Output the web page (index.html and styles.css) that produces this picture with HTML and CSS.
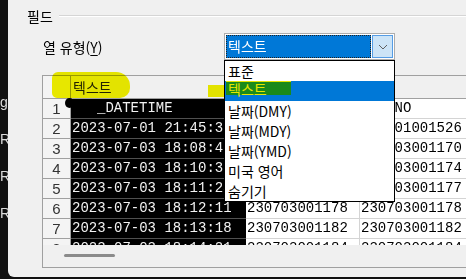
FILE: index.html
```html
<!DOCTYPE html>
<html lang="ko">
<head>
    <meta charset="UTF-8">
    <title>텍스트 마법사</title>
    <link rel="stylesheet" href="styles.css">
</head>
<body>
    <div class="side">
        <div>ge</div>
        <div>R</div>
        <div>Re</div>
        <div>Re</div>
    </div>
    <div class="win">
        <div class="group-head">
            <span class="group-label">필드</span>
            <span class="group-line"></span>
        </div>
        <div class="type-row">
            <label class="type-label">열 유형(<u>Y</u>)</label>
            <div class="combo">
                <div class="combo-val">텍스트</div>
                <div class="combo-btn">
                    <svg width="10" height="6" viewBox="0 0 10 6"><path d="M1 1 L5 5 L9 1" fill="none" stroke="#606060" stroke-width="1"/></svg>
                </div>
            </div>
        </div>

        <div class="grid">
            <div class="row head">
                <div class="rn"></div>
                <div class="c1">텍스트</div>
                <div class="c2">표준</div>
                <div class="c3">표준</div>
            </div>
            <div class="body">
                <div class="row"><div class="rn">1</div><div class="c1 sel first">_DATETIME</div><div class="c2">ITEM_NO</div><div class="c3">LOT_NO</div></div>
                <div class="row"><div class="rn">2</div><div class="c1 sel">2023-07-01 21:45:32</div><div class="c2">230701001526</div><div class="c3">230701001526</div></div>
                <div class="row"><div class="rn">3</div><div class="c1 sel">2023-07-03 18:08:45</div><div class="c2">230703001170</div><div class="c3">230703001170</div></div>
                <div class="row"><div class="rn">4</div><div class="c1 sel">2023-07-03 18:10:36</div><div class="c2">230703001174</div><div class="c3">230703001174</div></div>
                <div class="row"><div class="rn">5</div><div class="c1 sel">2023-07-03 18:11:24</div><div class="c2">230703001177</div><div class="c3">230703001177</div></div>
                <div class="row"><div class="rn">6</div><div class="c1 sel">2023-07-03 18:12:11</div><div class="c2">230703001178</div><div class="c3">230703001178</div></div>
                <div class="row"><div class="rn">7</div><div class="c1 sel">2023-07-03 18:13:18</div><div class="c2">230703001182</div><div class="c3">230703001182</div></div>
                <div class="row"><div class="rn">8</div><div class="c1 sel">2023-07-03 18:14:21</div><div class="c2">230703001184</div><div class="c3">230703001184</div></div>
            </div>
            <div class="hscroll"><div class="thumb"></div></div>
        </div>

        <!-- marker scribbles over the screenshot -->
        <div class="marker blob"></div>
        <div class="marker patch"></div>
        <div class="ink-dot"></div>

        <ul class="droplist">
            <li>표준</li>
            <li class="on"><span class="hl">텍스트</span></li>
            <li>날짜(DMY)</li>
            <li>날짜(MDY)</li>
            <li>날짜(YMD)</li>
            <li>미국 영어</li>
            <li>숨기기</li>
        </ul>
    </div>
</body>
</html>
```

FILE: styles.css
```css
body {
    margin: 0;
    background: #111;
    display: flex;
    height: 279px;
    overflow: hidden;
    font-family: "Noto Sans CJK KR", "Noto Sans", sans-serif;
}
.side {
    width: 8px;
    overflow: hidden;
    color: #ddd;
    font-family: "Liberation Sans", sans-serif;
    font-size: 14px;
    line-height: 37px;
    padding-top: 84px;
    white-space: nowrap;
}
.win {
    flex: 1;
    position: relative;
    height: 277px;
    background: #f0f0f0;
    border-bottom-left-radius: 6px;
    overflow: hidden;
    font-size: 14px;
    color: #000;
}
.group-head {
    display: flex;
    align-items: center;
    height: 20px;
    margin-top: 6px;
    padding-left: 19px;
}
.group-label {
    line-height: 20px;
}
.group-line {
    flex: 1;
    margin-left: 6px;
    border-top: 1px solid #d5d5d5;
    border-bottom: 1px solid #fff;
}
.type-row {
    display: flex;
    align-items: center;
    margin-top: 7px;
    padding-left: 35px;
}
.type-label {
    width: 181px;
    line-height: 20px;
}
.type-label u {
    text-underline-offset: 2px;
}
.combo {
    box-sizing: border-box;
    width: 171px;
    height: 27px;
    border: 1px solid #adadad;
    background: #fff;
    padding: 1px;
    display: flex;
    gap: 1px;
}
.combo-val {
    flex: 1;
    background: #0078d7;
    border: 1px dotted #222;
    color: #fff;
    line-height: 21px;
    padding-left: 1px;
}
.combo-btn {
    box-sizing: border-box;
    width: 21px;
    background: #cce4f7;
    border: 1px solid #569de5;
    display: flex;
    align-items: center;
    justify-content: center;
}
.grid {
    box-sizing: border-box;
    width: 520px;
    height: 193px;
    margin: 15px 0 0 34px;
    border: 1px solid #a0a0a0;
    background: #fff;
}
.row {
    display: flex;
    box-sizing: border-box;
    height: 20px;
    font-family: "Liberation Mono", monospace;
    font-size: 14px;
    line-height: 19px;
    white-space: nowrap;
}
.row > div {
    flex-shrink: 0;
    box-sizing: border-box;
    border-bottom: 1px solid #d4d4d4;
    overflow: hidden;
}
.rn {
    width: 28px;
    text-align: center;
    background: #f4f4f4;
    border-right: 1px solid #a0a0a0;
    font-family: "Liberation Sans", sans-serif;
    font-size: 15px;
    color: #333;
}
.row > .rn {
    border-bottom-color: #a0a0a0;
}
.c1 {
    width: 175px;
    padding-left: 1px;
}
.c2 {
    width: 114px;
    padding-left: 1px;
    border-right: 1px solid #d4d4d4;
}
.c3 {
    width: 200px;
    padding-left: 1px;
}
.row > .sel {
    background: #000;
    color: #f2f2f2;
    border-bottom-color: #505050;
}
.sel.first {
    padding-left: 26px;
}
.head {
    height: 23px;
    background: #f0f0f0;
    font-family: "Noto Sans CJK KR", sans-serif;
    line-height: 22px;
}
.head > div {
    border-bottom-color: #a0a0a0;
}
.head .c1 {
    padding-left: 2px;
    color: #222;
}
.body {
    height: 146px;
    overflow: hidden;
}
.hscroll {
    height: 22px;
    background: #f0f0f0;
    padding-top: 9px;
    box-sizing: border-box;
}
.thumb {
    width: 51px;
    height: 3px;
    margin-left: 21px;
    background: #8b8b8b;
    border-radius: 2px;
}
.marker {
    position: absolute;
    background: #f2f200;
    mix-blend-mode: multiply;
}
.blob {
    left: 44px;
    top: 72px;
    width: 78px;
    height: 26px;
    border-radius: 6px 14px 10px 5px;
}
.patch {
    left: 200px;
    top: 85px;
    width: 18px;
    height: 12px;
}
.ink-dot {
    position: absolute;
    left: 57px;
    top: 98px;
    width: 9px;
    height: 10px;
    border-radius: 50%;
    background: #000;
}
.droplist {
    position: absolute;
    left: 216px;
    top: 60px;
    width: 171px;
    box-sizing: border-box;
    margin: 0;
    padding: 0;
    list-style: none;
    background: #fff;
    border: 1px solid #000;
}
.droplist li {
    height: 20px;
    line-height: 20px;
    padding-left: 3px;
}
.droplist li.on {
    background: #0078d7;
}
.hl {
    display: inline-block;
    width: 63px;
    margin-left: -2px;
    padding-left: 2px;
    height: 13px;
    line-height: 15px;
    background: #1b8a1b;
    color: #e6e600;
    border-top: 1px solid #e6e600;
    vertical-align: top;
}
```
